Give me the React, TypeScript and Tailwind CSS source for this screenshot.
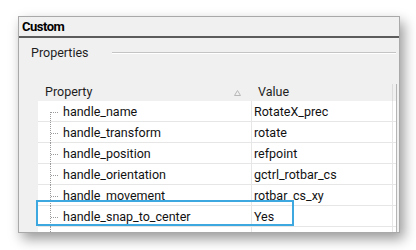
import React from "react";

const rows: [string, string][] = [
  ["handle_name", "RotateX_prec"],
  ["handle_transform", "rotate"],
  ["handle_position", "refpoint"],
  ["handle_orientation", "gctrl_rotbar_cs"],
  ["handle_movement", "rotbar_cs_xy"],
  ["handle_snap_to_center", "Yes"],
  ["handle_rotation_scroll_limit", "126"],
];

function Tree({ first }: { first: boolean }) {
  return (
    <svg width="25" height="21" className="shrink-0 block">
      <line
        x1="12.5"
        y1={first ? 11 : 0}
        x2="12.5"
        y2="21"
        stroke="#9a9a9a"
        strokeWidth="1"
        strokeDasharray="1 1"
      />
      <line x1="13" y1="11.5" x2="21" y2="11.5" stroke="#9a9a9a" strokeWidth="1" strokeDasharray="1 1" />
    </svg>
  );
}

export default function App() {
  const font = { fontFamily: 'Roboto, "Noto Sans", sans-serif' };
  return (
    <div className="relative w-[416px] h-[250px] bg-white overflow-hidden pt-[16px] pl-[18px]" style={font}>
      <div className="w-[382px] h-[217px] bg-[#f0f0f0] border border-[#a9a9a9] shadow-[4px_6px_12px_rgba(0,0,0,0.4)] overflow-hidden flex flex-col">
        <div className="h-[19px] shrink-0 pl-[3px] flex items-center text-[13px] font-bold text-black tracking-[-0.5px]">
          Custom
        </div>
        <div className="h-[2px] shrink-0 bg-[#5c5c5c]" />
        <div className="mt-[5px] h-[20px] shrink-0 flex items-center pl-[12px] pr-[3px] text-[12.5px] text-[#1e1e1e]">
          <span>Properties</span>
          <div className="flex-1 ml-[23px] h-[2px] border-t border-[#c4c4c4] border-b border-b-white" />
        </div>
        <div className="mt-[21px] ml-[19px] w-[359px] flex flex-col border-r border-[#b5b5b5]">
          <div className="h-[17px] flex text-[12.5px] text-[#1e1e1e]">
            <div className="w-[213px] pl-[7px] pr-[10px] flex items-center justify-between">
              <span>Property</span>
              <svg width="7" height="6" className="block">
                <path d="M3.5 0.5 L6.5 5.5 L0.5 5.5 Z" fill="none" stroke="#b8b8b8" strokeWidth="1" />
              </svg>
            </div>
            <div className="w-[142px] pl-[7px] flex items-center border-r border-[#dcdcdc]">Value</div>
          </div>
          {rows.map(([k, v], i) => (
            <div key={k} className="h-[21px] shrink-0 flex bg-white border-b border-[#e6e6e6] text-[12.5px] text-[#111]">
              <div className="w-[213px] flex items-start">
                <Tree first={i === 0} />
                <span className="pt-[1px] leading-[20px] whitespace-nowrap">{k}</span>
              </div>
              <div className="w-[142px] pl-[2px] pt-[1px] border-l border-r border-[#e6e6e6] leading-[20px] whitespace-nowrap">
                {v}
              </div>
            </div>
          ))}
        </div>
      </div>
      <div className="absolute left-[36px] top-[200px] w-[258px] h-[26px] border-2 border-[#3ca8df]" />
    </div>
  );
}
